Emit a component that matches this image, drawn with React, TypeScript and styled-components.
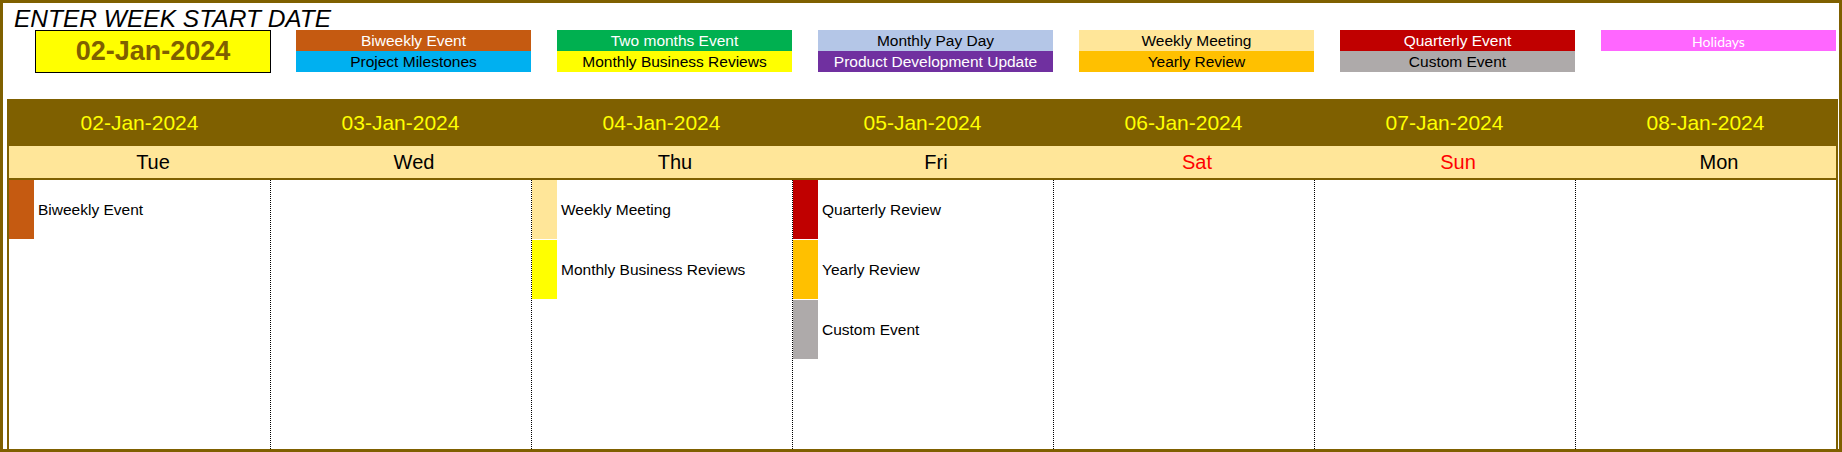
import React from 'react';
import styled, { createGlobalStyle } from 'styled-components';

const BROWN = '#7F6000';

const GlobalStyle = createGlobalStyle`
  html, body {
    margin: 0;
    padding: 0;
    background: #fff;
  }
  body {
    font-family: 'Liberation Sans', Arial, sans-serif;
  }
`;

type LegendEntry = { label: string; bg: string; color: string; alt?: boolean };
type CalEvent = { label: string; bg: string };
type Day = { date: string; name: string; weekend?: boolean; events: CalEvent[] };

const legendGroups: LegendEntry[][] = [
  [
    { label: 'Biweekly Event', bg: '#C55A11', color: '#fff' },
    { label: 'Project Milestones', bg: '#00B0F0', color: '#000' },
  ],
  [
    { label: 'Two months Event', bg: '#00B050', color: '#fff' },
    { label: 'Monthly Business Reviews', bg: '#FFFF00', color: '#000' },
  ],
  [
    { label: 'Monthly Pay Day', bg: '#B4C6E7', color: '#000' },
    { label: 'Product Development Update', bg: '#7030A0', color: '#fff' },
  ],
  [
    { label: 'Weekly Meeting', bg: '#FFE699', color: '#000' },
    { label: 'Yearly Review', bg: '#FFC000', color: '#000' },
  ],
  [
    { label: 'Quarterly Event', bg: '#C00000', color: '#fff' },
    { label: 'Custom Event', bg: '#AEAAAA', color: '#000' },
  ],
  [{ label: 'Holidays', bg: '#FF66FF', color: '#fff', alt: true }],
];

const days: Day[] = [
  { date: '02-Jan-2024', name: 'Tue', events: [{ label: 'Biweekly Event', bg: '#C55A11' }] },
  { date: '03-Jan-2024', name: 'Wed', events: [] },
  {
    date: '04-Jan-2024',
    name: 'Thu',
    events: [
      { label: 'Weekly Meeting', bg: '#FFE699' },
      { label: 'Monthly Business Reviews', bg: '#FFFF00' },
    ],
  },
  {
    date: '05-Jan-2024',
    name: 'Fri',
    events: [
      { label: 'Quarterly Review', bg: '#C00000' },
      { label: 'Yearly Review', bg: '#FFC000' },
      { label: 'Custom Event', bg: '#AEAAAA' },
    ],
  },
  { date: '06-Jan-2024', name: 'Sat', weekend: true, events: [] },
  { date: '07-Jan-2024', name: 'Sun', weekend: true, events: [] },
  { date: '08-Jan-2024', name: 'Mon', events: [] },
];

const Sheet = styled.div`
  box-sizing: border-box;
  width: 1842px;
  height: 452px;
  border: 3px solid ${BROWN};
  padding-top: 4px;
  overflow: hidden;
`;

const Title = styled.div`
  height: 23px;
  line-height: 23px;
  font-size: 24.5px;
  font-style: italic;
  color: #000;
  padding-left: 11px;
  white-space: nowrap;
`;

const TopRow = styled.div`
  display: flex;
  height: 43px;
  padding-left: 32px;
`;

const DateBox = styled.div`
  box-sizing: border-box;
  width: 236px;
  height: 43px;
  border: 1px solid #000;
  background: #ffff00;
  display: flex;
  align-items: center;
  justify-content: center;
  font-size: 27px;
  font-weight: bold;
  color: ${BROWN};
`;

const Legend = styled.div`
  display: flex;
  gap: 26px;
  margin-left: 25px;
`;

const LegendGroup = styled.div`
  width: 235px;
  display: flex;
  flex-direction: column;
`;

const LegendItem = styled.div<{ $bg: string; $color: string; $alt?: boolean }>`
  height: 21px;
  line-height: ${p => (p.$alt ? '23px' : '21px')};
  background: ${p => p.$bg};
  color: ${p => p.$color};
  text-align: center;
  font-size: ${p => (p.$alt ? '14px' : '15.5px')};
  font-family: ${p => (p.$alt ? "Lato, 'Open Sans', sans-serif" : "'Liberation Sans', Arial, sans-serif")};
  white-space: nowrap;
`;

const Calendar = styled.div`
  box-sizing: border-box;
  width: 1831px;
  height: 350px;
  margin: 26px 0 0 4px;
  border-left: 2px solid ${BROWN};
  border-right: 2px solid ${BROWN};
  display: flex;
  flex-direction: column;
`;

const Row = styled.div`
  display: grid;
  grid-template-columns: repeat(7, 261px);
`;

const DateRow = styled(Row)`
  height: 47px;
  background: ${BROWN};
`;

const DateCell = styled.div`
  display: flex;
  align-items: center;
  justify-content: center;
  color: #ffff00;
  font-size: 21px;
`;

const DayRow = styled(Row)`
  height: 32px;
  background: #ffe699;
  border-bottom: 2px solid ${BROWN};
`;

const DayCell = styled.div<{ $weekend?: boolean }>`
  display: flex;
  align-items: center;
  justify-content: center;
  padding-left: 27px;
  font-size: 20px;
  color: ${p => (p.$weekend ? '#FF0000' : '#000')};
`;

const Body = styled(Row)`
  flex: 1;
`;

const Column = styled.div<{ $first?: boolean }>`
  border-left: ${p => (p.$first ? 'none' : '1px dotted #000')};
  display: flex;
  flex-direction: column;
`;

const EventRow = styled.div`
  display: flex;
  height: 59px;
  margin-bottom: 1px;
`;

const Swatch = styled.div<{ $bg: string }>`
  width: 25px;
  background: ${p => p.$bg};
`;

const EventLabel = styled.div`
  align-self: center;
  padding-left: 4px;
  font-size: 15.5px;
  color: #000;
  white-space: nowrap;
`;

export default function App() {
  return (
    <>
      <GlobalStyle />
      <Sheet>
        <Title>ENTER WEEK START DATE</Title>
        <TopRow>
          <DateBox>02-Jan-2024</DateBox>
          <Legend>
            {legendGroups.map((group, i) => (
              <LegendGroup key={i}>
                {group.map(item => (
                  <LegendItem key={item.label} $bg={item.bg} $color={item.color} $alt={item.alt}>
                    {item.label}
                  </LegendItem>
                ))}
              </LegendGroup>
            ))}
          </Legend>
        </TopRow>
        <Calendar>
          <DateRow>
            {days.map(d => (
              <DateCell key={d.date}>{d.date}</DateCell>
            ))}
          </DateRow>
          <DayRow>
            {days.map(d => (
              <DayCell key={d.name} $weekend={d.weekend}>
                {d.name}
              </DayCell>
            ))}
          </DayRow>
          <Body>
            {days.map((d, i) => (
              <Column key={d.date} $first={i === 0}>
                {d.events.map(ev => (
                  <EventRow key={ev.label}>
                    <Swatch $bg={ev.bg} />
                    <EventLabel>{ev.label}</EventLabel>
                  </EventRow>
                ))}
              </Column>
            ))}
          </Body>
        </Calendar>
      </Sheet>
    </>
  );
}
